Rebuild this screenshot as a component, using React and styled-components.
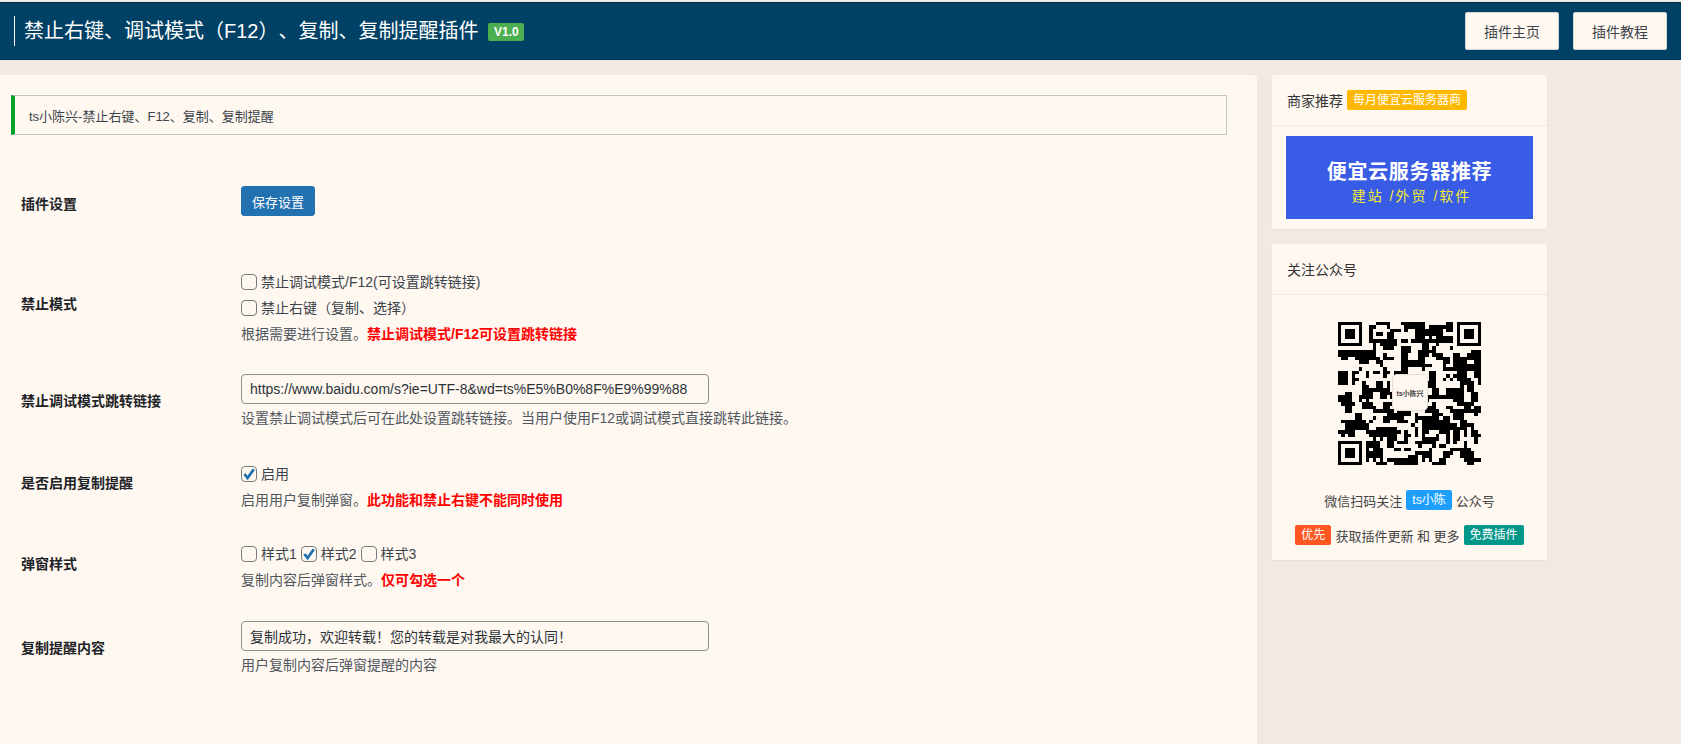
import styled, { createGlobalStyle } from 'styled-components';

const GlobalStyle = createGlobalStyle`
    html, body {
        margin: 0;
        padding: 0;
        background: #f1e9e3;
        font-family: "Liberation Sans", "Noto Sans CJK SC", sans-serif;
        font-size: 14px;
        color: #3c434a;
    }
`;

const Page = styled.div`
    height: 744px;
    overflow: hidden;
    padding-top: 2px;
    box-sizing: border-box;
`;

const Header = styled.header`
    height: 58px;
    box-sizing: border-box;
    background: #004165;
    border-top: 1px solid #00304d;
    border-bottom: 1px solid #00304d;
    display: flex;
    align-items: center;
    justify-content: space-between;
    padding: 0 14px 0 14px;
`;

const TitleGroup = styled.div`
    display: flex;
    align-items: center;
`;

const Title = styled.h1`
    margin: 0;
    padding-left: 9px;
    border-left: 1px solid #fff;
    height: 30px;
    line-height: 30px;
    font-size: 20px;
    font-weight: 400;
    color: #fff;
    text-spacing-trim: space-all;
`;

const Version = styled.span`
    margin-left: 10px;
    margin-top: 2px;
    background: #4caf50;
    color: #fff;
    font-size: 12px;
    font-weight: 700;
    line-height: 18px;
    padding: 0 5.5px;
    border-radius: 2px;
`;

const HeaderActions = styled.div`
    display: flex;
    gap: 14px;
`;

const HeaderButton = styled.a`
    width: 94px;
    height: 38px;
    box-sizing: border-box;
    display: flex;
    align-items: center;
    justify-content: center;
    background: #fff8f1;
    border: 1px solid #d5d5d5;
    border-radius: 2px;
    font-size: 14px;
    color: #3c434a;
`;

const Body = styled.div`
    display: flex;
    align-items: flex-start;
    gap: 15px;
    padding-top: 15px;
`;

const Main = styled.main`
    width: 1257px;
    height: 669px;
    box-sizing: border-box;
    background: #fff8f1;
    border-radius: 0 4px 0 0;
    padding: 20px 30px 0 11px;
`;

const Notice = styled.div`
    height: 40px;
    box-sizing: border-box;
    display: flex;
    align-items: center;
    border: 1px solid #c3c4c7;
    border-left: 4px solid #00a32a;
    padding-left: 14px;
    font-size: 13px;
    color: #3c434a;
`;

const Form = styled.div`
    margin-top: 30px;
    padding-left: 10px;
`;

const Row = styled.div`
    display: flex;
    align-items: center;
    padding: ${(p) => p.$top || 16}px 0 ${(p) => p.$bottom || 16}px;
`;

const Label = styled.div`
    width: 220px;
    flex: none;
    margin-top: ${(p) => p.$down || 0}px;
    margin-bottom: ${(p) => p.$up || 0}px;
    font-size: 14px;
    font-weight: 700;
    color: #1d2327;
`;

const Field = styled.div`
    display: flex;
    flex-direction: column;
`;

const SaveButton = styled.button`
    width: 74px;
    height: 30px;
    padding: 0;
    background: #2271b1;
    border: 1px solid #2271b1;
    border-radius: 3px;
    color: #fff;
    font: inherit;
    font-size: 13px;
`;

const Options = styled.div`
    display: flex;
    gap: ${(p) => p.$gap || 0}px;
    height: ${(p) => p.$height || 26}px;
    align-items: center;
`;

const Option = styled.label`
    display: inline-flex;
    align-items: center;
    gap: 4px;
    line-height: 26px;
`;

const Box = styled.span`
    width: 16px;
    height: 16px;
    box-sizing: border-box;
    border: 1px solid #7a7a7a;
    border-radius: 4px;
    background: #fff8f1;
    display: inline-flex;
    align-items: center;
    justify-content: center;
`;

const Description = styled.p`
    margin: 0;
    line-height: 26px;
    font-size: 14px;
    color: #50575e;
`;

const Warn = styled.strong`
    color: #ff0000;
`;

const TextInput = styled.input`
    width: 468px;
    height: 30px;
    box-sizing: border-box;
    padding: 0 8px;
    margin-bottom: 1px;
    background: #fff8f1;
    border: 1px solid #8c8f94;
    border-radius: 4px;
    font: inherit;
    font-size: 14px;
    color: #2c3338;
    outline: none;
`;

const Sidebar = styled.aside`
    width: 275px;
    display: flex;
    flex-direction: column;
    gap: 15px;
`;

const Card = styled.section`
    background: #fff8f1;
    border-radius: 2px;
    box-shadow: 0 1px 2px rgba(0, 0, 0, 0.05);
`;

const CardHeader = styled.div`
    height: 51px;
    box-sizing: border-box;
    display: flex;
    align-items: center;
    gap: 4px;
    padding: 0 15px;
    border-bottom: 1px dotted #e6dfd8;
    font-size: 14px;
    color: #333;
`;

const Tag = styled.span`
    background: ${(p) => p.$color};
    color: #fff;
    font-size: 12px;
    line-height: 20px;
    padding: 0 6px;
    border-radius: 2px;
`;

const BannerWrap = styled.div`
    padding: 10px 14px;
`;

const Banner = styled.div`
    height: 83px;
    background: #385ce6;
    display: flex;
    flex-direction: column;
    align-items: center;
    padding-top: 22px;
    box-sizing: border-box;
`;

const BannerTitle = styled.div`
    color: #fff;
    font-size: 20px;
    font-weight: 700;
    line-height: 28px;
    letter-spacing: 0.7px;
`;

const BannerSub = styled.div`
    color: #f5ec30;
    font-size: 14px;
    line-height: 20px;
    letter-spacing: 2px;
    padding-left: 4px;
`;

const QrBody = styled.div`
    padding: 27px 10px 15px;
    display: flex;
    flex-direction: column;
    align-items: center;
`;

const QrFrame = styled.div`
    position: relative;
    width: 143px;
    height: 143px;
`;

const QrLogo = styled.div`
    position: absolute;
    left: 54px;
    top: 52px;
    width: 36px;
    height: 37px;
    box-sizing: border-box;
    display: flex;
    align-items: center;
    justify-content: center;
    background: #fff8f1;
    border: 1px solid #e6dfd8;
    border-radius: 5px;
    font-size: 7px;
    font-weight: 700;
    color: #444;
`;

const QrLine = styled.div`
    display: flex;
    align-items: center;
    gap: 4px;
    height: 20px;
    margin-top: ${(p) => p.$top}px;
    font-size: 13px;
    color: #444;
`;

const SIZE = 41;

// finder pattern modules at the three corners of the code
function inFinder(x, y) {
    const inBox = (ox, oy) => x >= ox && x < ox + 8 && y >= oy && y < oy + 8;
    return inBox(0, 0) || inBox(SIZE - 8, 0) || inBox(0, SIZE - 8);
}

function finderOn(x, y) {
    const fx = x >= SIZE - 8 ? x - (SIZE - 7) : x;
    const fy = y >= SIZE - 8 ? y - (SIZE - 7) : y;
    if (fx < 0 || fy < 0 || fx > 6 || fy > 6) return false;
    if (fx === 0 || fx === 6 || fy === 0 || fy === 6) return true;
    return fx >= 2 && fx <= 4 && fy >= 2 && fy <= 4;
}

function buildModules() {
    let seed = 7331;
    const noise = [];
    for (let i = 0; i < SIZE * SIZE; i++) {
        seed = (seed * 1103515245 + 12345) & 0x7fffffff;
        noise.push((seed >> 16) % 100 < 47 ? 1 : 0);
    }
    const at = (x, y) => (x < 0 || y < 0 || x >= SIZE || y >= SIZE ? 0 : noise[y * SIZE + x]);

    const cells = [];
    for (let y = 0; y < SIZE; y++) {
        for (let x = 0; x < SIZE; x++) {
            // one smoothing pass so the modules clump like the real code
            const sum = at(x, y) * 2 + at(x - 1, y) + at(x + 1, y) + at(x, y - 1) + at(x, y + 1);
            const on = inFinder(x, y) ? finderOn(x, y) : sum >= 3;
            if (on) cells.push([x, y]);
        }
    }
    return cells;
}

const modules = buildModules();

function QrCode() {
    return (
        <svg width="143" height="143" viewBox={`0 0 ${SIZE} ${SIZE}`} shapeRendering="crispEdges">
            {modules.map(([x, y]) => (
                <rect key={`${x}-${y}`} x={x} y={y} width="1" height="1" fill="#000" />
            ))}
        </svg>
    );
}

function Check({ checked }) {
    return (
        <Box>
            {checked && (
                <svg width="14" height="14" viewBox="0 0 14 14">
                    <path d="M2.4 7 L5.6 11 L11.8 2.2" fill="none" stroke="#1e6fb0" strokeWidth="2.8" />
                </svg>
            )}
        </Box>
    );
}

export default function App() {
    return (
        <Page>
            <GlobalStyle />
            <Header>
                <TitleGroup>
                    <Title>禁止右键、调试模式（F12）、复制、复制提醒插件</Title>
                    <Version>V1.0</Version>
                </TitleGroup>
                <HeaderActions>
                    <HeaderButton>插件主页</HeaderButton>
                    <HeaderButton>插件教程</HeaderButton>
                </HeaderActions>
            </Header>
            <Body>
                <Main>
                    <Notice>ts小陈兴-禁止右键、F12、复制、复制提醒</Notice>
                    <Form>
                        <Row $top={21} $bottom={37}>
                            <Label $down={4}>插件设置</Label>
                            <Field>
                                <SaveButton>保存设置</SaveButton>
                            </Field>
                        </Row>
                        <Row $bottom={11}>
                            <Label $up={11}>禁止模式</Label>
                            <Field>
                                <Options>
                                    <Option><Check />禁止调试模式/F12(可设置跳转链接)</Option>
                                </Options>
                                <Options>
                                    <Option><Check />禁止右键（复制、选择）</Option>
                                </Options>
                                <Description>
                                    根据需要进行设置。<Warn>禁止调试模式/F12可设置跳转链接</Warn>
                                </Description>
                            </Field>
                        </Row>
                        <Row $bottom={13}>
                            <Label $up={6}>禁止调试模式跳转链接</Label>
                            <Field>
                                <TextInput readOnly value="https://www.baidu.com/s?ie=UTF-8&wd=ts%E5%B0%8F%E9%99%88" />
                                <Description>设置禁止调试模式后可在此处设置跳转链接。当用户使用F12或调试模式直接跳转此链接。</Description>
                            </Field>
                        </Row>
                        <Row $bottom={12}>
                            <Label $up={9}>是否启用复制提醒</Label>
                            <Field>
                                <Options $height={27}>
                                    <Option><Check checked />启用</Option>
                                </Options>
                                <Description>
                                    启用用户复制弹窗。<Warn>此功能和禁止右键不能同时使用</Warn>
                                </Description>
                            </Field>
                        </Row>
                        <Row $bottom={12}>
                            <Label $up={9}>弹窗样式</Label>
                            <Field>
                                <Options $gap={4}>
                                    <Option><Check />样式1</Option>
                                    <Option><Check checked />样式2</Option>
                                    <Option><Check />样式3</Option>
                                </Options>
                                <Description>
                                    复制内容后弹窗样式。<Warn>仅可勾选一个</Warn>
                                </Description>
                            </Field>
                        </Row>
                        <Row>
                            <Label $up={6}>复制提醒内容</Label>
                            <Field>
                                <TextInput readOnly value="复制成功，欢迎转载！您的转载是对我最大的认同！" />
                                <Description>用户复制内容后弹窗提醒的内容</Description>
                            </Field>
                        </Row>
                    </Form>
                </Main>
                <Sidebar>
                    <Card>
                        <CardHeader>
                            商家推荐<Tag $color="#ffb800">每月便宜云服务器商</Tag>
                        </CardHeader>
                        <BannerWrap>
                            <Banner>
                                <BannerTitle>便宜云服务器推荐</BannerTitle>
                                <BannerSub>建站 /外贸 /软件</BannerSub>
                            </Banner>
                        </BannerWrap>
                    </Card>
                    <Card>
                        <CardHeader>关注公众号</CardHeader>
                        <QrBody>
                            <QrFrame>
                                <QrCode />
                                <QrLogo>ts小陈兴</QrLogo>
                            </QrFrame>
                            <QrLine $top={25}>
                                微信扫码关注<Tag $color="#1e9fff">ts小陈</Tag>公众号
                            </QrLine>
                            <QrLine $top={15}>
                                <Tag $color="#ff5722">优先</Tag>获取插件更新 和 更多<Tag $color="#009688">免费插件</Tag>
                            </QrLine>
                        </QrBody>
                    </Card>
                </Sidebar>
            </Body>
        </Page>
    );
}
